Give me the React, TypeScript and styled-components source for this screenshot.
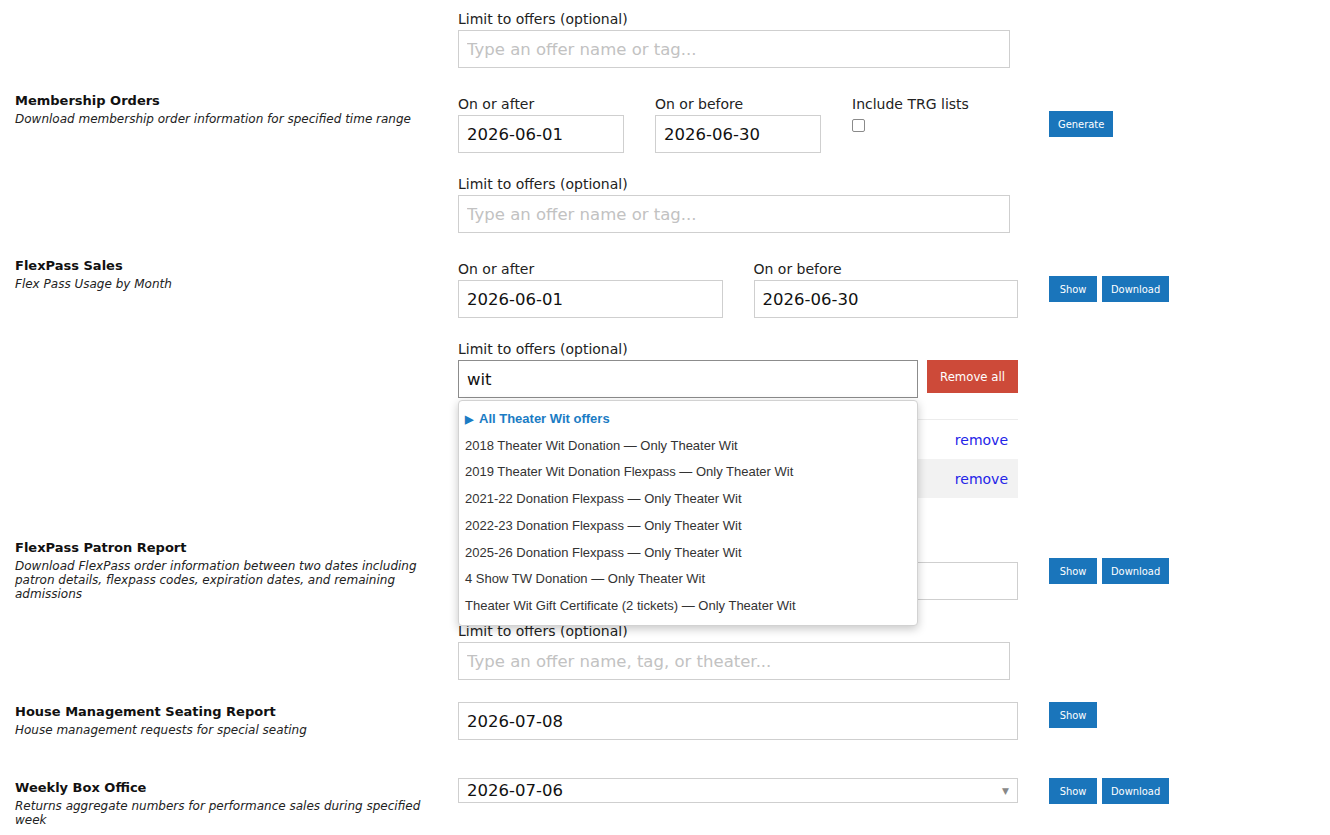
import styled, { createGlobalStyle } from 'styled-components'

const GlobalStyle = createGlobalStyle`
  body {
    margin: 0;
    background: #ffffff;
    font-family: "DejaVu Sans", Verdana, sans-serif;
    color: #111111;
  }
`

const OFFERS = [
  '2018 Theater Wit Donation — Only Theater Wit',
  '2019 Theater Wit Donation Flexpass — Only Theater Wit',
  '2021-22 Donation Flexpass — Only Theater Wit',
  '2022-23 Donation Flexpass — Only Theater Wit',
  '2025-26 Donation Flexpass — Only Theater Wit',
  '4 Show TW Donation — Only Theater Wit',
  'Theater Wit Gift Certificate (2 tickets) — Only Theater Wit',
]

type ReportProps = {
  title?: string
  description?: string
  labelled?: boolean
  top: number
  buttons?: string[]
  children: React.ReactNode
}

const Report = ({ title, description, labelled = true, top, buttons = [], children }: ReportProps) => (
  <Row $top={top}>
    <Side $labelled={labelled}>
      {title && <Title>{title}</Title>}
      {description && <Description>{description}</Description>}
    </Side>
    <Fields>{children}</Fields>
    <Actions $labelled={labelled}>
      {buttons.map((b) => (
        <ActionButton key={b}>{b}</ActionButton>
      ))}
    </Actions>
  </Row>
)

const Field = ({ label, children }: { label: string; children: React.ReactNode }) => (
  <FieldBox>
    <Label>{label}</Label>
    {children}
  </FieldBox>
)

const DateRange = ({ cols, after, before }: { cols: number; after: string; before: string }) => (
  <DateGrid $cols={cols}>
    <Field label="On or after">
      <TextInput defaultValue={after} />
    </Field>
    <Field label="On or before">
      <TextInput defaultValue={before} />
    </Field>
  </DateGrid>
)

export default function App() {
  return (
    <Page>
      <GlobalStyle />

      <Report top={0}>
        <Field label="Limit to offers (optional)">
          <TextInput $width={552} placeholder="Type an offer name or tag..." />
        </Field>
      </Report>

      <Report
        title="Membership Orders"
        description="Download membership order information for specified time range"
        top={26}
        buttons={['Generate']}
      >
        <DateGrid $cols={3}>
          <Field label="On or after">
            <TextInput defaultValue="2026-06-01" />
          </Field>
          <Field label="On or before">
            <TextInput defaultValue="2026-06-30" />
          </Field>
          <Field label="Include TRG lists">
            <Checkbox type="checkbox" />
          </Field>
        </DateGrid>
        <Field label="Limit to offers (optional)">
          <TextInput $width={552} placeholder="Type an offer name or tag..." />
        </Field>
      </Report>

      <Report
        title="FlexPass Sales"
        description="Flex Pass Usage by Month"
        top={26}
        buttons={['Show', 'Download']}
      >
        <DateRange cols={2} after="2026-06-01" before="2026-06-30" />
        <Field label="Limit to offers (optional)">
          <SearchRow>
            <SearchWrap>
              <TextInput $focused defaultValue="wit" />
              <Dropdown>
                <GroupOption>
                  <Arrow>▶</Arrow>All Theater Wit offers
                </GroupOption>
                {OFFERS.map((o) => (
                  <Option key={o}>{o}</Option>
                ))}
              </Dropdown>
            </SearchWrap>
            <RemoveAll>Remove all</RemoveAll>
          </SearchRow>
        </Field>
        <Selected>
          <SelectedRow $shade={false}>
            <RemoveLink>remove</RemoveLink>
          </SelectedRow>
          <SelectedRow $shade>
            <RemoveLink>remove</RemoveLink>
          </SelectedRow>
        </Selected>
      </Report>

      <Report
        title="FlexPass Patron Report"
        description="Download FlexPass order information between two dates including patron details, flexpass codes, expiration dates, and remaining admissions"
        top={43}
        buttons={['Show', 'Download']}
      >
        <DateRange cols={2} after="2026-06-01" before="2026-06-30" />
        <Field label="Limit to offers (optional)">
          <TextInput $width={552} placeholder="Type an offer name, tag, or theater..." />
        </Field>
      </Report>

      <Report
        title="House Management Seating Report"
        description="House management requests for special seating"
        labelled={false}
        top={22}
        buttons={['Show']}
      >
        <TextInput defaultValue="2026-07-08" />
      </Report>

      <Report
        title="Weekly Box Office"
        description="Returns aggregate numbers for performance sales during specified week"
        labelled={false}
        top={38}
        buttons={['Show', 'Download']}
      >
        <SelectBox>
          <span>2026-07-06</span>
          <SelectArrow>▼</SelectArrow>
        </SelectBox>
      </Report>
    </Page>
  )
}

const Page = styled.div`
  padding: 9px 0 40px 15px;
`

const Row = styled.section<{ $top: number }>`
  display: grid;
  grid-template-columns: 443px 560px auto;
  align-items: start;
  margin-top: ${(p) => p.$top}px;
`

const Side = styled.div<{ $labelled: boolean }>`
  padding-right: 20px;
  margin-top: ${(p) => (p.$labelled ? -1 : 2)}px;
`

const Title = styled.h3`
  margin: 0;
  font-size: 13px;
  line-height: 16px;
  font-weight: bold;
  color: #111111;
`

const Description = styled.p`
  margin: 3px 0 0;
  font-size: 12px;
  line-height: 14px;
  font-style: italic;
  color: #222222;
`

const Fields = styled.div`
  display: flex;
  flex-direction: column;
  gap: 21px;
`

const Actions = styled.div<{ $labelled: boolean }>`
  display: flex;
  gap: 5px;
  padding-left: 31px;
  padding-top: ${(p) => (p.$labelled ? 17 : 0)}px;
`

const ActionButton = styled.button`
  height: 26px;
  min-width: 48px;
  padding: 0 9px;
  border: none;
  border-radius: 0;
  background: #1a75bb;
  color: #ffffff;
  font-family: "DejaVu Sans Condensed", "DejaVu Sans", sans-serif;
  font-stretch: condensed;
  font-size: 11px;
`

const FieldBox = styled.div`
  display: flex;
  flex-direction: column;
  align-items: flex-start;
`

const Label = styled.label`
  font-size: 14px;
  line-height: 20px;
  margin-bottom: 1px;
  color: #222222;
`

const DateGrid = styled.div<{ $cols: number }>`
  display: grid;
  grid-template-columns: repeat(${(p) => p.$cols}, 1fr);
  column-gap: 31px;
`

const TextInput = styled.input<{ $width?: number; $focused?: boolean }>`
  box-sizing: border-box;
  width: ${(p) => (p.$width ? `${p.$width}px` : '100%')};
  height: 38px;
  padding: 1px 8px 0;
  border: 1px solid ${(p) => (p.$focused ? '#8c8c8c' : '#cfcfcf')};
  border-radius: 0;
  background: #ffffff;
  font-family: "DejaVu Sans", Verdana, sans-serif;
  font-size: 16.5px;
  color: #111111;
  outline: none;

  &::placeholder {
    color: #c2c2c2;
  }
`

const Checkbox = styled.input`
  appearance: none;
  width: 13px;
  height: 13px;
  margin: 4px 0 0;
  border: 1px solid #8a8a8a;
  border-radius: 2px;
  background: #ffffff;
`

const SearchRow = styled.div`
  display: flex;
  align-items: flex-start;
  gap: 9px;
  width: 560px;
`

const SearchWrap = styled.div`
  position: relative;
  width: 460px;
`

const Dropdown = styled.div`
  position: absolute;
  top: 40px;
  left: 0;
  z-index: 5;
  box-sizing: border-box;
  width: 460px;
  padding: 5px 0;
  background: #ffffff;
  border: 1px solid #d2d2d2;
  border-radius: 4px;
  box-shadow: 0 3px 10px rgba(0, 0, 0, 0.22);
  font-family: "Liberation Sans", Arial, sans-serif;
`

const Option = styled.div`
  padding: 5px 6px;
  font-size: 13px;
  line-height: 16.7px;
  color: #333333;
  white-space: nowrap;
`

const GroupOption = styled(Option)`
  font-weight: bold;
  color: #1b7cc4;
`

const Arrow = styled.span`
  display: inline-block;
  width: 14px;
  font-size: 11px;
`

const RemoveAll = styled.button`
  height: 33px;
  width: 91px;
  border: none;
  border-radius: 0;
  background: #cd4a39;
  color: #ffffff;
  font-family: "DejaVu Sans Condensed", "DejaVu Sans", sans-serif;
  font-stretch: condensed;
  font-size: 13px;
`

const Selected = styled.div`
  width: 560px;
  border-top: 1px solid #ececec;
`

const SelectedRow = styled.div<{ $shade: boolean }>`
  display: flex;
  justify-content: flex-end;
  align-items: center;
  height: 39px;
  padding: 0 10px;
  box-sizing: border-box;
  background: ${(p) => (p.$shade ? '#f2f2f2' : '#ffffff')};
`

const RemoveLink = styled.a`
  color: #2424e8;
  font-size: 14px;
  cursor: pointer;
`

const SelectBox = styled.div`
  box-sizing: border-box;
  display: flex;
  justify-content: space-between;
  align-items: center;
  width: 560px;
  height: 25px;
  padding: 0 8px;
  border: 1px solid #cfcfcf;
  background: #ffffff;
  font-size: 16.5px;
  color: #111111;
`

const SelectArrow = styled.span`
  font-size: 9px;
  color: #888888;
`
